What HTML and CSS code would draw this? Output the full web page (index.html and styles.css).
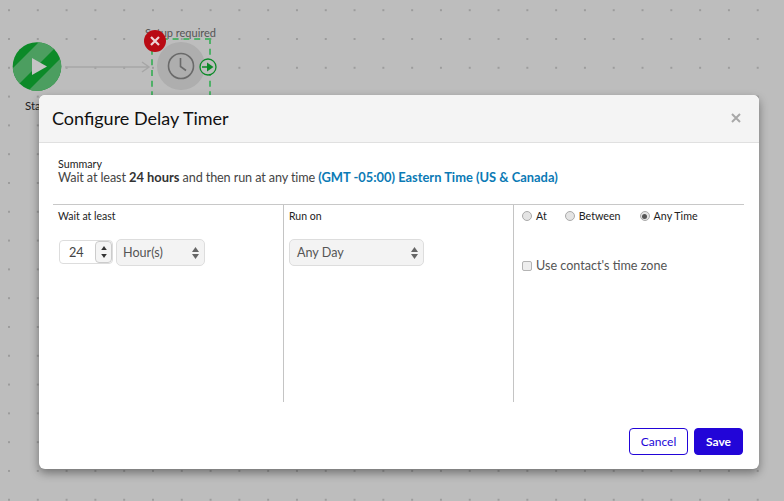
FILE: index.html
```html
<!DOCTYPE html>
<html lang="en">
<head>
<meta charset="utf-8">
<title>Configure Delay Timer</title>
<link rel="stylesheet" href="styles.css">
</head>
<body>
<main class="canvas">
  <div class="node-start">
    <svg width="50" height="50" viewBox="0 0 50 50">
      <defs><clipPath id="c"><circle cx="25" cy="24.500" r="24.300"/></clipPath></defs>
      <circle cx="25" cy="24.500" r="24.300" fill="#0c8a28"/>
      <g clip-path="url(#c)" fill="#4c9e60">
        <polygon points="0,27 27,0 49,0 0,49"/>
        <polygon points="15,50 50,15 50,50"/>
      </g>
      <polygon points="20,16 20,33 35,24.500" fill="#c4c4c4"/>
    </svg>
  </div>
  <span class="label-start">Start</span>
  <svg class="connector" width="90" height="14" viewBox="0 0 90 14">
    <path d="M0 7H84M77 2l7 5-7 5" fill="none" stroke="#a6a6a6" stroke-width="1.500"/>
  </svg>
  <span class="label-setup">Setup required</span>
  <div class="selection"></div>
  <div class="node-delay">
    <svg width="28" height="28" viewBox="0 0 28 28" fill="none" stroke="#6a6a6a" stroke-width="1.600">
      <circle cx="14" cy="14" r="12.500"/>
      <path d="M13.500 6v8.500l5.500 4"/>
    </svg>
  </div>
  <div class="node-error">
    <svg width="10" height="10" viewBox="0 0 10 10"><path d="M1 1l8 8M9 1l-8 8" stroke="#ecd6d6" stroke-width="2.200"/></svg>
  </div>
  <div class="node-out">
    <svg width="18" height="18" viewBox="0 0 18 18">
      <circle cx="9" cy="9" r="8" fill="#bdbdbd" stroke="#0c8a28" stroke-width="1.300"/>
      <path d="M3 9h6" stroke="#0c8a28" stroke-width="1.500"/>
      <polygon points="8,4.500 8,13.500 14.500,9" fill="#0c8a28"/>
    </svg>
  </div>

  <section class="modal">
    <header class="modal-head">
      <h1 class="modal-title">Configure Delay Timer</h1>
      <svg class="modal-close" width="10" height="10" viewBox="0 0 10 10"><path d="M1 1l8 8M9 1l-8 8" stroke="#a8a8a8" stroke-width="2"/></svg>
    </header>
    <div class="summary">
      <div class="summary-label">Summary</div>
      <div class="summary-text">Wait at least <b>24 hours</b> and then run at any time <b class="tz">(GMT -05:00) Eastern Time (US &amp; Canada)</b></div>
    </div>
    <div class="columns">
      <div class="col col-wait">
        <div class="col-label">Wait at least</div>
        <div class="controls">
          <div class="number">
            <span class="number-value">24</span>
            <span class="stepper">
              <svg width="6" height="4" viewBox="0 0 7 5"><polygon points="3.500,0 7,5 0,5" fill="#333"/></svg>
              <svg width="6" height="4" viewBox="0 0 7 5"><polygon points="0,0 7,0 3.500,5" fill="#333"/></svg>
            </span>
          </div>
          <div class="select select-unit">
            <span>Hour(s)</span>
            <span class="arrows">
              <svg width="7" height="5" viewBox="0 0 7 5"><polygon points="3.500,0 7,5 0,5" fill="#666"/></svg>
              <svg width="7" height="5" viewBox="0 0 7 5"><polygon points="0,0 7,0 3.500,5" fill="#666"/></svg>
            </span>
          </div>
        </div>
      </div>
      <div class="col col-run">
        <div class="col-label">Run on</div>
        <div class="controls">
          <div class="select select-day">
            <span>Any Day</span>
            <span class="arrows">
              <svg width="7" height="5" viewBox="0 0 7 5"><polygon points="3.500,0 7,5 0,5" fill="#666"/></svg>
              <svg width="7" height="5" viewBox="0 0 7 5"><polygon points="0,0 7,0 3.500,5" fill="#666"/></svg>
            </span>
          </div>
        </div>
      </div>
      <div class="col col-time">
        <div class="radios">
          <label class="radio"><span class="radio-dot"></span>At</label>
          <label class="radio"><span class="radio-dot"></span>Between</label>
          <label class="radio"><span class="radio-dot radio-on"></span>Any Time</label>
        </div>
        <label class="check"><span class="check-box"></span>Use contact's time zone</label>
      </div>
    </div>
    <footer class="modal-foot">
      <button class="btn btn-cancel">Cancel</button>
      <button class="btn btn-save">Save</button>
    </footer>
  </section>
</main>
</body>
</html>
```

FILE: styles.css
```css
* { box-sizing: border-box; }
html, body { margin: 0; padding: 0; }
body { font-family: "Lato", "Liberation Sans", sans-serif; color: #333; }
.canvas {
  position: relative;
  width: 784px;
  height: 501px;
  overflow: hidden;
  background-color: #bdbdbd;
  background-image: radial-gradient(circle at 1px 1px, #9c9c9c 0.8px, transparent 1.2px);
  background-size: 28.8px 28.8px;
  background-position: 8px 38px;
}
.node-start { position: absolute; left: 12px; top: 42px; width: 50px; height: 50px; }
.label-start { position: absolute; left: 25px; top: 99px; font-size: 11.500px; color: #222; }
.connector { position: absolute; left: 65px; top: 60px; }
.label-setup { position: absolute; left: 145px; top: 26px; font-size: 11px; color: #555; }
.selection { position: absolute; left: 151px; top: 38px; width: 60px; height: 70px; border: 2px dashed #4fb068; }
.node-delay {
  position: absolute; left: 157px; top: 42px; width: 48px; height: 48px; border-radius: 50%;
  background: #aeaeae; display: flex; align-items: center; justify-content: center;
}
.node-error {
  position: absolute; left: 144px; top: 30px; width: 22px; height: 22px; border-radius: 50%;
  background: #b90b14; display: flex; align-items: center; justify-content: center;
}
.node-out { position: absolute; left: 199px; top: 58px; width: 18px; height: 18px; }
.modal {
  position: absolute; left: 39px; top: 95px; width: 720px; height: 374px;
  background: #fff; border-radius: 6px; box-shadow: 0 4px 10px rgba(0,0,0,.4);
  display: flex; flex-direction: column; overflow: hidden;
}
.modal-head {
  height: 48px; background: #f4f4f4; border-bottom: 1px solid #e0e0e0;
  display: flex; align-items: center; justify-content: space-between; padding: 0 18px 2px 13px;
}
.modal-title { margin: 0; font-size: 18px; font-weight: 400; color: #111; }
.summary { padding: 14px 19px 0; font-size: 12.650px; line-height: 14px; height: 61px; }
.summary-label { font-size: 10.700px; color: #222; }
.summary-text { color: #444; letter-spacing: -.12px; margin-top: -1px; }
.summary-text b { color: #333; font-size: 12.900px; letter-spacing: 0; }
.summary-text .tz { color: #0b7ab5; }
.columns { display: flex; height: 198px; margin: 0 15px 0 14px; border-top: 1px solid #c8c8c8; }
.col { border-right: 1px solid #c4c4c4; padding: 4px 0 0 6px; }
.col-wait { width: 231px; padding-left: 5px; }
.col-run { width: 230px; padding-left: 5px; }
.col-time { flex: 1; border-right: 0; padding-left: 8px; }
.col-label { font-size: 10.500px; line-height: 14px; color: #222; }
.controls { display: flex; align-items: flex-start; gap: 3px; margin-top: 16px; }
.number {
  width: 54px; height: 24px; margin-top: 1px; margin-left: 1px; border: 1px solid #ddd; border-radius: 4px; background: #fff;
  display: flex; align-items: center; justify-content: space-between; font-size: 12.700px; color: #444;
}
.number-value { padding-left: 9px; }
.stepper {
  width: 17px; height: 22px; border: 1px solid #ccc; border-radius: 4px; background: #f4f4f4;
  display: flex; flex-direction: column; align-items: center; justify-content: center; gap: 4px;
}
.stepper svg, .arrows svg { display: block; }
.select {
  height: 27px; border: 1px solid #ddd; border-radius: 5px; background: #f3f3f3;
  display: flex; align-items: center; justify-content: space-between; padding: 0 5px 1px 7px;
  font-size: 12.600px; color: #555;
}
.select-unit { width: 89px; padding-left: 6px; }
.select-day { width: 135px; }
.arrows { display: flex; flex-direction: column; gap: 2px; padding-top: 1px; }
.radios { display: flex; font-size: 10.700px; line-height: 14px; color: #222; }
.radio { display: flex; align-items: center; gap: 4px; margin-right: 18px; }
.radio:nth-child(2) { margin-right: 19px; }
.radio-dot {
  width: 10px; height: 10px; border-radius: 50%; border: 1px solid #aaa; background: #e4e4e4; position: relative;
}
.radio-on::after {
  content: ""; position: absolute; left: 1.500px; top: 1.500px; width: 5px; height: 5px; border-radius: 50%; background: #555;
}
.check { display: flex; align-items: center; gap: 4px; margin-top: 35px; font-size: 12.600px; line-height: 16px; color: #555; }
.check-box { width: 10px; height: 10px; border: 1px solid #b4b4b4; border-radius: 2px; background: #eee; }
.modal-foot { display: flex; justify-content: flex-end; gap: 6px; padding: 26px 16px 0 0; }
.btn { height: 27px; border-radius: 4px; font: 400 12px "Lato", "Liberation Sans", sans-serif; border: 1px solid #2205d8; padding: 0; }
.btn-cancel { width: 59px; background: #fff; color: #2205d8; }
.btn-save { width: 49px; background: #2205d8; color: #fff; font-weight: 700; }
```
